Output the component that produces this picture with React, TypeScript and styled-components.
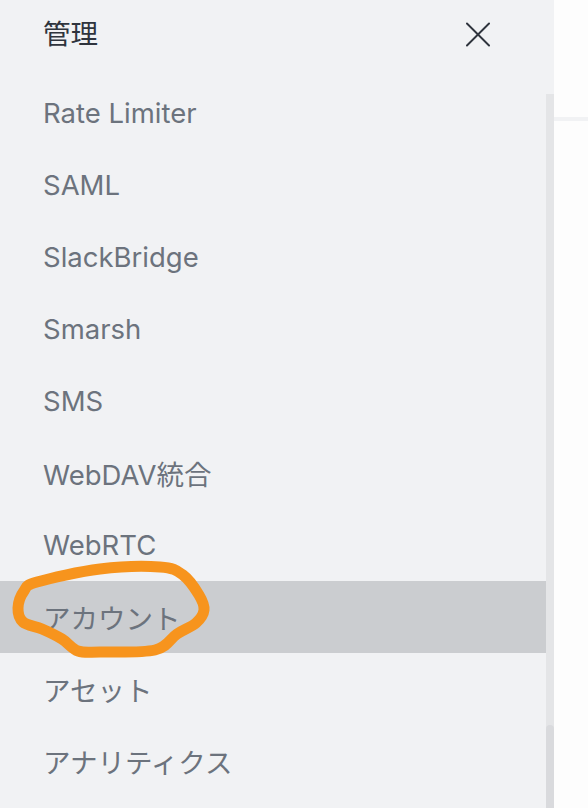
import React from "react";
import styled, { createGlobalStyle } from "styled-components";

const GlobalStyle = createGlobalStyle`
  html, body {
    margin: 0;
    padding: 0;
    background: #fdfdfd;
  }
  body {
    font-family: Inter, "Noto Sans CJK JP", sans-serif;
  }
`;

const ITEMS = [
  "Rate Limiter",
  "SAML",
  "SlackBridge",
  "Smarsh",
  "SMS",
  "WebDAV統合",
  "WebRTC",
  "アカウント",
  "アセット",
  "アナリティクス",
];

const ACTIVE = "アカウント";

// hand drawn marker around the active item
const MARK_POINTS: [number, number][] = [
  [37, 582],
  [100, 569],
  [160, 567],
  [183, 575],
  [199, 595],
  [204, 610],
  [196, 623],
  [177, 634],
  [155, 650],
  [100, 652],
  [78, 651],
  [62, 639],
  [42, 629],
  [23, 622],
  [18, 608],
  [24, 591],
];

const smoothPath = (pts: [number, number][]) => {
  const n = pts.length;
  let d = `M${pts[0][0]},${pts[0][1]}`;
  for (let i = 0; i < n; i++) {
    const p0 = pts[(i - 1 + n) % n];
    const p1 = pts[i];
    const p2 = pts[(i + 1) % n];
    const p3 = pts[(i + 2) % n];
    const c1x = p1[0] + (p2[0] - p0[0]) / 6;
    const c1y = p1[1] + (p2[1] - p0[1]) / 6;
    const c2x = p2[0] - (p3[0] - p1[0]) / 6;
    const c2y = p2[1] - (p3[1] - p1[1]) / 6;
    d += ` C${c1x},${c1y} ${c2x},${c2y} ${p2[0]},${p2[1]}`;
  }
  return d;
};

const Page = styled.div`
  position: relative;
  display: flex;
  flex-direction: row;
  width: 588px;
  height: 808px;
  overflow: hidden;
`;

const Sidebar = styled.div`
  width: 554px;
  flex-shrink: 0;
  display: flex;
  flex-direction: column;
  background-color: #f1f2f4;
`;

const SidebarHeader = styled.div`
  height: 77px;
  flex-shrink: 0;
  display: flex;
  flex-direction: row;
  align-items: center;
  justify-content: space-between;
  padding: 0 64px 8px 43px;
  box-sizing: border-box;
`;

const HeaderTitle = styled.div`
  font-size: 27.5px;
  color: #2f343d;
  line-height: 1;
`;

const CloseButton = styled.div`
  width: 24px;
  height: 24px;
  display: flex;
  align-items: center;
  justify-content: center;
  cursor: pointer;
`;

const SidebarBody = styled.div`
  flex: 1;
  display: flex;
  flex-direction: row;
  min-height: 0;
`;

const MenuList = styled.div`
  flex: 1;
  display: flex;
  flex-direction: column;
`;

const MenuItem = styled.div<{ $active?: boolean }>`
  height: 72px;
  flex-shrink: 0;
  display: flex;
  align-items: center;
  padding-left: 43px;
  font-size: 27.5px;
  color: #6c737d;
  background-color: ${(props) => (props.$active ? "#cbcdd0" : "transparent")};
`;

const ScrollTrack = styled.div`
  width: 8px;
  margin-top: 17px;
  display: flex;
  flex-direction: column;
  justify-content: flex-end;
  background-color: #e4e5e7;
`;

const ScrollThumb = styled.div`
  height: 83px;
  border-radius: 4px 4px 0 0;
  background-color: #d9dadd;
`;

const Content = styled.div`
  flex: 1;
  background-color: #fdfdfd;
`;

const ContentDivider = styled.div`
  margin-top: 117px;
  height: 4px;
  background-color: #f1f2f4;
`;

const Marker = styled.svg`
  position: absolute;
  top: 0;
  left: 0;
  pointer-events: none;
`;

const App = () => {
  return (
    <Page>
      <GlobalStyle />
      <Sidebar>
        <SidebarHeader>
          <HeaderTitle>管理</HeaderTitle>
          <CloseButton>
            <svg width="25" height="25" viewBox="0 0 25 25">
              <path
                d="M1 1 L24 24 M24 1 L1 24"
                stroke="#2f343d"
                strokeWidth="2"
                strokeLinecap="round"
                fill="none"
              />
            </svg>
          </CloseButton>
        </SidebarHeader>
        <SidebarBody>
          <MenuList>
            {ITEMS.map((item) => (
              <MenuItem key={item} $active={item === ACTIVE}>
                {item}
              </MenuItem>
            ))}
          </MenuList>
          <ScrollTrack>
            <ScrollThumb />
          </ScrollTrack>
        </SidebarBody>
      </Sidebar>
      <Content>
        <ContentDivider />
      </Content>
      <Marker width="588" height="808" viewBox="0 0 588 808">
        <path
          d={smoothPath(MARK_POINTS)}
          stroke="#f7941d"
          strokeWidth="11"
          strokeLinejoin="round"
          fill="none"
        />
      </Marker>
    </Page>
  );
};

export default App;
